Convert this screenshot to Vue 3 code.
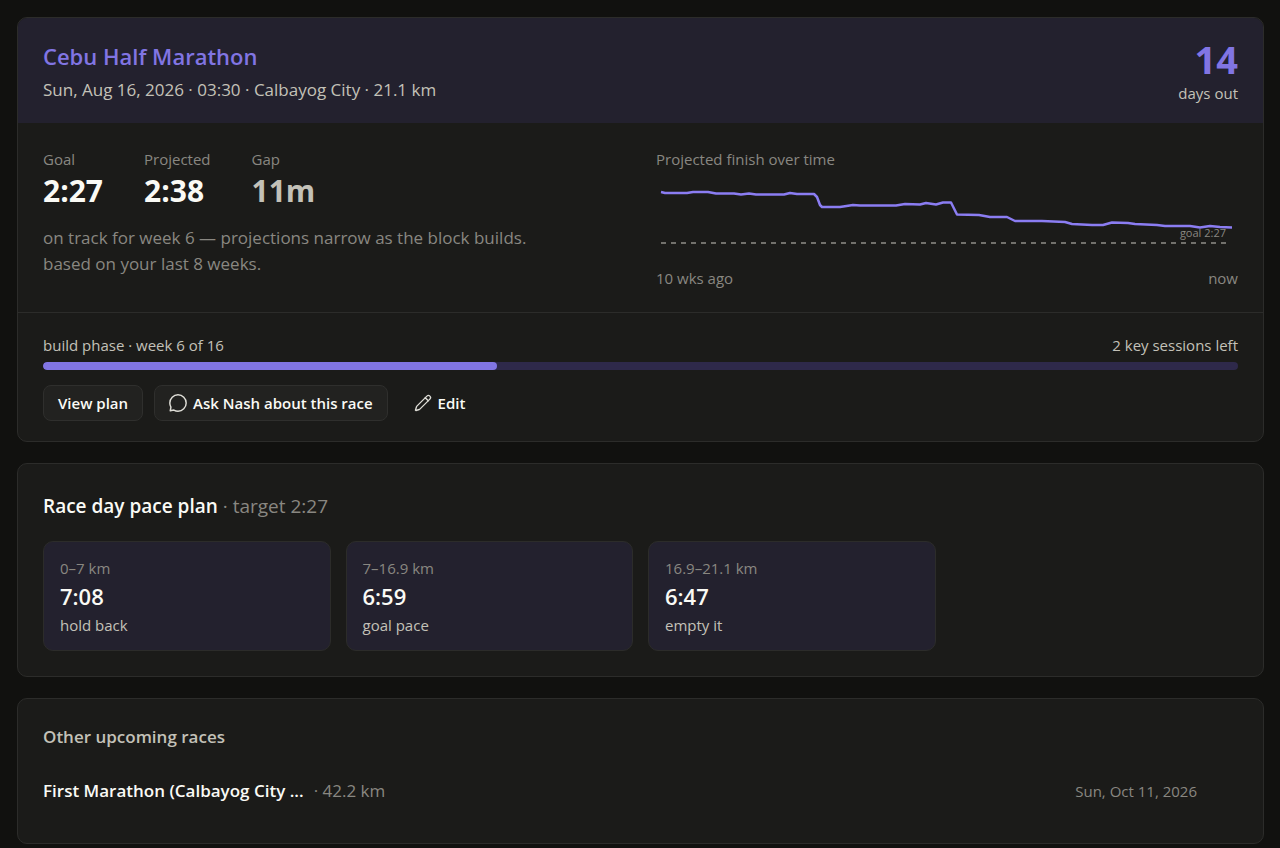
<template>
  <main class="races">
    <section class="card">
      <header class="race-header">
        <div>
          <h1>{{ race.name }}</h1>
          <p class="race-meta">{{ race.meta }}</p>
        </div>
        <div class="countdown">
          <span class="countdown-value">{{ race.daysOut }}</span>
          <span class="countdown-label">days out</span>
        </div>
      </header>

      <div class="race-body">
        <div>
          <dl class="stats">
            <div v-for="stat in stats" :key="stat.label">
              <dt>{{ stat.label }}</dt>
              <dd :class="{ muted: stat.muted }">{{ stat.value }}</dd>
            </div>
          </dl>
          <p class="note">
            on track for week 6 — projections narrow as the block builds.<br />
            based on your last 8 weeks.
          </p>
        </div>

        <div class="trend">
          <p class="trend-title">Projected finish over time</p>
          <svg class="chart" viewBox="0 0 582 84" role="img" aria-label="Projected finish over time">
            <line class="goal-line" x1="5" y1="67" x2="575" y2="67" />
            <polyline class="trend-line" :points="trendPoints" />
            <text x="570" y="61" text-anchor="end">goal 2:27</text>
          </svg>
          <div class="axis">
            <span>10 wks ago</span>
            <span>now</span>
          </div>
        </div>
      </div>

      <footer class="race-footer">
        <div class="phase">
          <span>build phase · week {{ block.week }} of {{ block.total }}</span>
          <span>2 key sessions left</span>
        </div>
        <div class="progress">
          <div class="progress-fill" :style="{ width: block.percent + '%' }"></div>
        </div>
        <div class="actions">
          <button type="button" class="btn">View plan</button>
          <button type="button" class="btn">
            <svg class="icon" viewBox="1 1 22 22">
              <path d="M12 22c5.52 0 10-4.48 10-10S17.52 2 12 2 2 6.48 2 12c0 1.82.49 3.53 1.34 5L2.5 21.5l4.5-.84A9.96 9.96 0 0 0 12 22z" />
            </svg>
            Ask Nash about this race
          </button>
          <button type="button" class="btn ghost">
            <svg class="icon" viewBox="0 0 24 24">
              <path d="M21.17 6.81a1 1 0 0 0-3.98-3.98L3.84 16.17a2 2 0 0 0-.5.83l-1.32 4.35a.5.5 0 0 0 .62.62l4.35-1.32a2 2 0 0 0 .83-.5z" />
              <path d="m15 5 4 4" />
            </svg>
            Edit
          </button>
        </div>
      </footer>
    </section>

    <section class="card padded">
      <h2>Race day pace plan <span>· target 2:27</span></h2>
      <div class="segments">
        <div v-for="segment in segments" :key="segment.range" class="segment">
          <span class="segment-range">{{ segment.range }}</span>
          <span class="segment-pace">{{ segment.pace }}</span>
          <span class="segment-cue">{{ segment.cue }}</span>
        </div>
      </div>
    </section>

    <section class="card padded others">
      <h3>Other upcoming races</h3>
      <div v-for="other in otherRaces" :key="other.name" class="other-race">
        <span class="other-name">{{ other.name }}</span>
        <span class="other-distance">· {{ other.distance }}</span>
        <span class="other-date">{{ other.date }}</span>
      </div>
    </section>
  </main>
</template>

<script setup>
import { computed } from 'vue';

const race = {
  name: 'Cebu Half Marathon',
  meta: 'Sun, Aug 16, 2026 · 03:30 · Calbayog City · 21.1 km',
  daysOut: 14,
};

const stats = [
  { label: 'Goal', value: '2:27' },
  { label: 'Projected', value: '2:38' },
  { label: 'Gap', value: '11m', muted: true },
];

const block = { week: 6, total: 16, percent: 38 };

const segments = [
  { range: '0–7 km', pace: '7:08', cue: 'hold back' },
  { range: '7–16.9 km', pace: '6:59', cue: 'goal pace' },
  { range: '16.9–21.1 km', pace: '6:47', cue: 'empty it' },
];

const otherRaces = [
  { name: 'First Marathon (Calbayog City ...', distance: '42.2 km', date: 'Sun, Oct 11, 2026' },
];

// Projection history in chart units
const trend = [
  [5, 16], [9, 17], [31, 17], [37, 16], [52, 16], [60, 17.5], [78, 17.5], [85, 18.5],
  [93, 17.5], [100, 18.5], [128, 18.5], [134, 17], [141, 18], [158, 18], [161, 21],
  [164, 29], [166, 31], [184, 31], [197, 29], [204, 29.5], [240, 29.5], [249, 28],
  [264, 28.5], [270, 27], [280, 28.5], [287, 26.5], [295, 26.5], [301, 38.5], [323, 39],
  [334, 41], [351, 41], [359, 45], [386, 45], [409, 46], [416, 48], [436, 49], [447, 49],
  [456, 46.5], [472, 47], [479, 48], [501, 49], [509, 50], [534, 50], [544, 51.5],
  [554, 50], [564, 51], [576, 51.5],
];

const trendPoints = computed(() => trend.map((p) => p.join(',')).join(' '));
</script>

<style>
body {
  margin: 0;
  background: #11110f;
}
</style>

<style scoped>
.races {
  display: flex;
  flex-direction: column;
  gap: 21px;
  padding: 17px 16px 4px 17px;
  font-family: 'Segoe UI', 'Open Sans', 'Noto Sans', sans-serif;
  font-size: 15px;
  line-height: 20px;
  color: #fafaf5;
}

h1,
h2,
h3,
p,
dl,
dd {
  margin: 0;
}

.card {
  overflow: hidden;
  background: #1b1b19;
  border: 1px solid #2c2c2a;
  border-radius: 10px;
}

.padded {
  padding: 25px;
}

.race-header {
  display: flex;
  justify-content: space-between;
  padding: 22px 25px 20px;
  background: #23212e;
}

h1 {
  font-size: 22px;
  line-height: 32px;
  font-weight: 600;
  color: #8175e3;
}

.race-meta {
  margin-top: 5px;
  font-size: 17px;
  line-height: 26px;
  color: #c3c1b8;
}

.countdown {
  display: flex;
  flex-direction: column;
  text-align: right;
}

.countdown-value {
  font-size: 38px;
  line-height: 38px;
  font-weight: 700;
  color: #8175e3;
}

.countdown-label {
  margin-top: 5px;
  color: #c3c1b8;
}

.race-body {
  display: grid;
  grid-template-columns: 1fr 1fr;
  gap: 31px;
  padding: 26px 25px 24px;
  border-bottom: 1px solid #2c2c2a;
}

.stats {
  display: flex;
  gap: 41px;
}

dt,
.trend-title,
.axis {
  color: #898781;
}

dd {
  margin-top: 4px;
  font-size: 30px;
  line-height: 36px;
  font-weight: 700;
}

dd.muted {
  color: #c3c1b8;
}

.note {
  margin-top: 16px;
  font-size: 17px;
  line-height: 26px;
  color: #898781;
}

.chart {
  display: block;
  width: 100%;
  margin-top: 7px;
}

.chart text {
  font-size: 11px;
  fill: #898781;
}

.goal-line {
  stroke: #72716c;
  stroke-width: 2;
  stroke-dasharray: 5 5;
}

.trend-line {
  fill: none;
  stroke: #8b7df2;
  stroke-width: 2.5;
  stroke-linejoin: round;
}

.axis {
  display: flex;
  justify-content: space-between;
  margin-top: 8px;
}

.race-footer {
  padding: 22px 25px 20px;
}

.phase {
  display: flex;
  justify-content: space-between;
  color: #c3c1b8;
}

.progress {
  height: 8px;
  margin-top: 7px;
  overflow: hidden;
  background: #2e294a;
  border-radius: 4px;
}

.progress-fill {
  height: 100%;
  background: #8175e3;
  border-radius: 4px;
}

.actions {
  display: flex;
  gap: 11px;
  margin-top: 15px;
}

.btn {
  display: flex;
  align-items: center;
  gap: 6px;
  height: 36px;
  padding: 0 14px;
  font: inherit;
  font-weight: 600;
  color: inherit;
  background: #222220;
  border: 1px solid #2f2f2d;
  border-radius: 8px;
}

.btn.ghost {
  background: transparent;
  border-color: transparent;
}

.icon {
  width: 18px;
  height: 18px;
  fill: none;
  stroke: #deddd6;
  stroke-width: 1.8;
  stroke-linecap: round;
  stroke-linejoin: round;
}

h2 {
  font-size: 19px;
  line-height: 34px;
  font-weight: 600;
}

h2 span {
  font-weight: 400;
  color: #898781;
}

.segments {
  display: grid;
  grid-template-columns: repeat(4, 1fr);
  gap: 15px;
  margin-top: 18px;
}

.segment {
  display: flex;
  flex-direction: column;
  padding: 16px 16px 15px;
  background: #23212e;
  border: 1px solid #2c2c2a;
  border-radius: 10px;
}

.segment-range {
  color: #898781;
}

.segment-pace {
  margin: 2px 0 3px;
  font-size: 22px;
  line-height: 32px;
  font-weight: 600;
}

.segment-cue {
  color: #c3c1b8;
}

h3 {
  font-size: 17px;
  line-height: 26px;
  font-weight: 600;
  color: #c3c1b8;
}

.other-race {
  display: flex;
  align-items: center;
  gap: 10px;
  margin-top: 14px;
  padding: 14px 41px 14px 0;
  font-size: 17px;
  line-height: 26px;
}

.other-name {
  font-weight: 600;
}

.other-distance {
  color: #898781;
}

.other-date {
  margin-left: auto;
  font-size: 15px;
  color: #898781;
}
</style>
